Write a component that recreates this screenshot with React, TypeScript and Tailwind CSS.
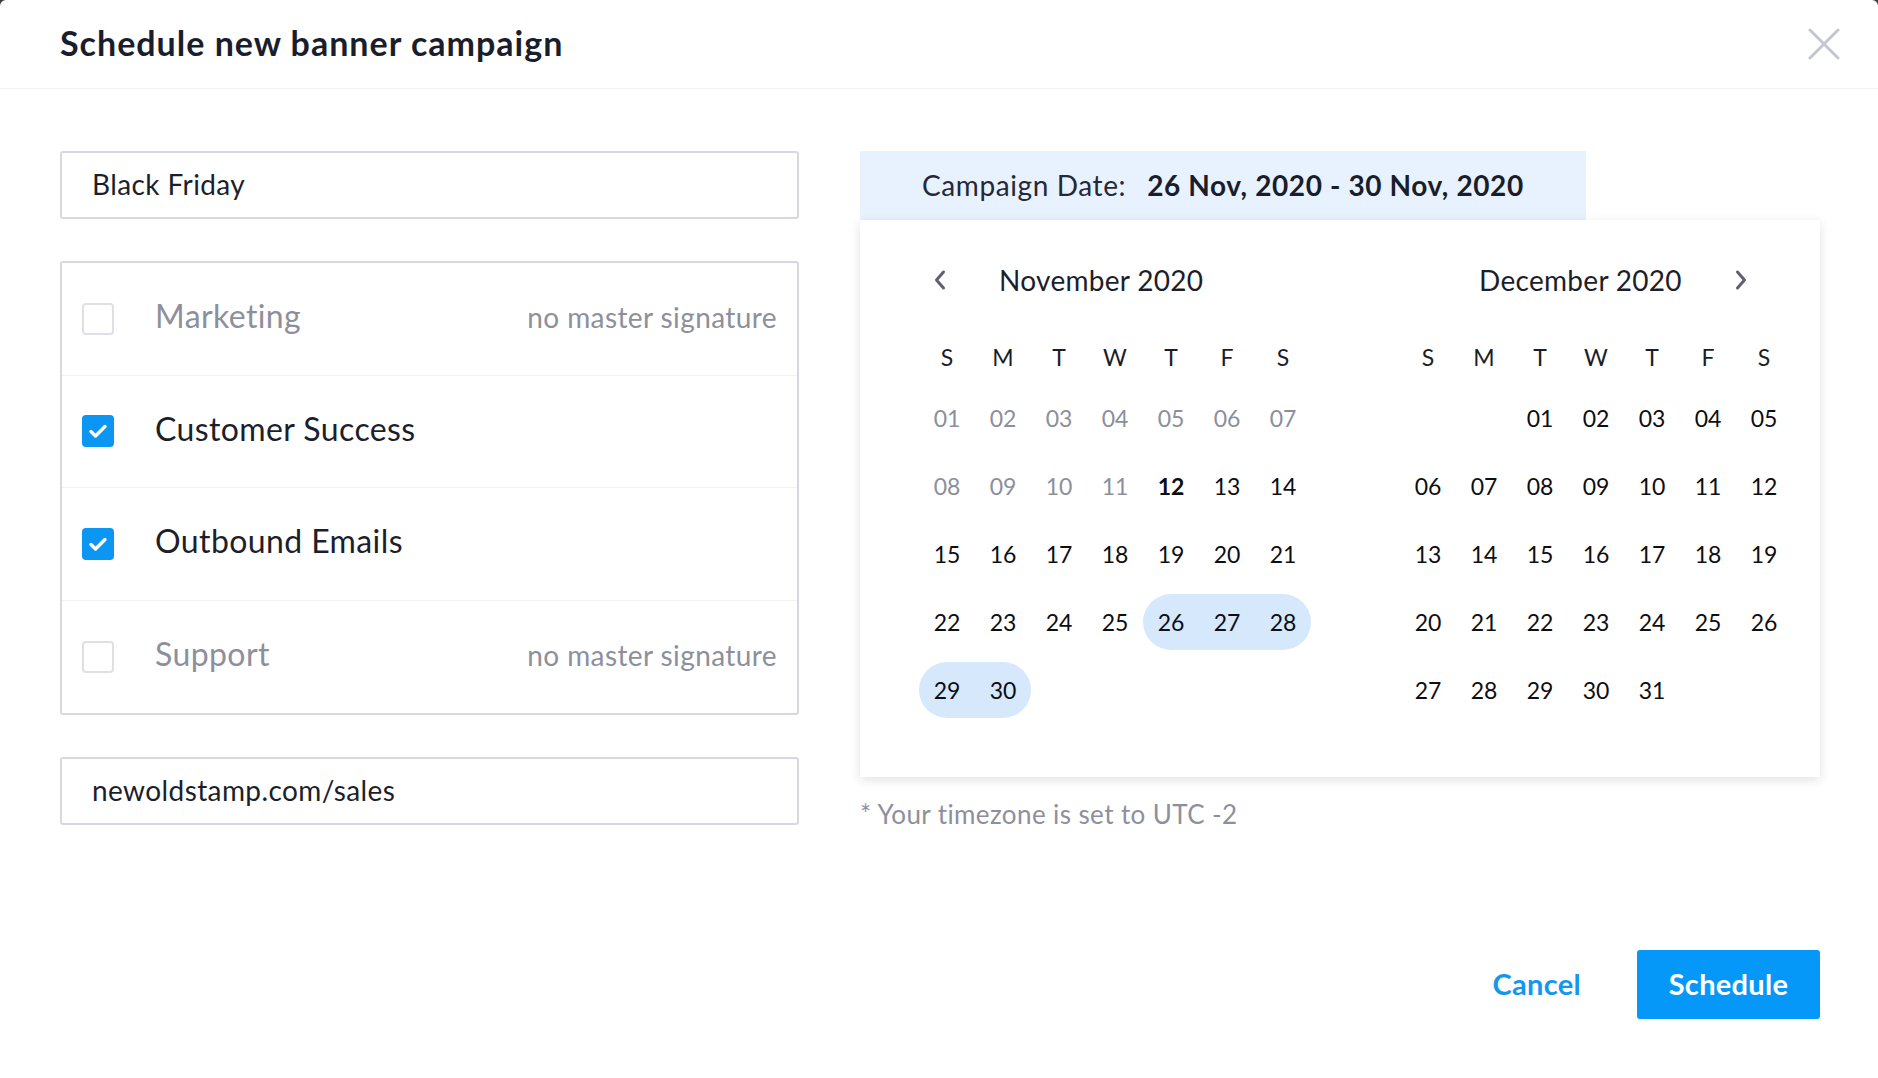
import React from "react";

const font = { fontFamily: "Lato, 'Noto Sans', sans-serif" };

type Row = { label: string; checked: boolean; note?: string };

const ROWS: Row[] = [
  { label: "Marketing", checked: false, note: "no master signature" },
  { label: "Customer Success", checked: true },
  { label: "Outbound Emails", checked: true },
  { label: "Support", checked: false, note: "no master signature" },
];

const WEEK = ["S", "M", "T", "W", "T", "F", "S"];

function pad(n: number) {
  return n < 10 ? `0${n}` : `${n}`;
}

function Checkbox({ checked }: { checked: boolean }) {
  if (!checked) {
    return <span className="block h-[32px] w-[32px] shrink-0 rounded-[4px] border-2 border-[#dfe0e7] bg-white" />;
  }
  return (
    <span className="flex h-[32px] w-[32px] shrink-0 items-center justify-center rounded-[4px] bg-[#0c96f3]">
      <svg width="20" height="16" viewBox="0 0 20 16" fill="none">
        <path d="M3 8.5l4.5 4.5L17 3.5" stroke="white" strokeWidth="3.4" strokeLinecap="round" strokeLinejoin="round" />
      </svg>
    </span>
  );
}

function Chevron({ dir }: { dir: "left" | "right" }) {
  return (
    <svg width="14" height="22" viewBox="0 0 14 22" fill="none">
      <path
        d={dir === "left" ? "M10.5 3L3.5 11l7 8" : "M3.5 3l7 8-7 8"}
        stroke="#5d6170"
        strokeWidth="3"
        strokeLinecap="round"
        strokeLinejoin="round"
      />
    </svg>
  );
}

function Month({
  offset,
  days,
  muted = 0,
  today,
  range,
}: {
  offset: number;
  days: number;
  muted?: number;
  today?: number;
  range?: [number, number];
}) {
  const cells: (number | null)[] = [];
  for (let i = 0; i < offset; i++) cells.push(null);
  for (let d = 1; d <= days; d++) cells.push(d);

  return (
    <div className="w-[392px]">
      <div className="grid h-[40px] grid-cols-7 items-center text-[23px] text-[#1b1d27]">
        {WEEK.map((w, i) => (
          <span key={i} className="text-center">{w}</span>
        ))}
      </div>
      <div className="mt-[13px] grid grid-cols-7 gap-y-[12px]">
        {cells.map((d, i) => {
          if (d === null) return <span key={i} className="h-[56px]" />;
          const col = i % 7;
          const inRange = range && d >= range[0] && d <= range[1];
          const start = inRange && (d === range![0] || col === 0);
          const end = inRange && (d === range![1] || col === 6);
          return (
            <span
              key={i}
              className={[
                "flex h-[56px] items-center justify-center text-[23px]",
                inRange ? "bg-[#d6e8fc]" : "",
                start ? "rounded-l-full" : "",
                end ? "rounded-r-full" : "",
                d <= muted ? "text-[#8c8f9b]" : "text-[#0d0e12]",
                d === today ? "font-bold" : "",
              ].join(" ")}
            >
              {pad(d)}
            </span>
          );
        })}
      </div>
    </div>
  );
}

export default function App() {
  return (
    <div className="min-h-screen bg-[#3c3c3c]" style={font}>
      <div className="flex h-[1078px] w-[1878px] flex-col rounded-t-[6px] bg-white">
        <header className="flex h-[89px] shrink-0 items-center justify-between border-b border-[#f1f2f4] pl-[60px] pr-[38px]">
          <h1 className="pb-[4px] text-[34px] font-bold tracking-[1px] text-[#1a1e2c]">Schedule new banner campaign</h1>
          <button aria-label="Close">
            <svg width="32" height="32" viewBox="0 0 32 32" fill="none">
              <path d="M2 2l28 28M30 2L2 30" stroke="#c4c6d0" strokeWidth="3" strokeLinecap="round" />
            </svg>
          </button>
        </header>

        <div className="flex gap-[61px] pl-[60px] pr-[58px] pt-[62px]">
          {/* left column */}
          <div className="w-[739px] shrink-0">
            <div className="flex h-[68px] items-center rounded-[3px] border-2 border-[#d8d9e0] px-[30px] pb-[2px] text-[28px] tracking-[0.4px] text-[#1c1f2b]">
              Black Friday
            </div>

            <div className="mt-[42px] rounded-[3px] border-2 border-[#d8d9e0] divide-y divide-[#f1f2f5]">
              {ROWS.map((r) => (
                <div key={r.label} className="flex h-[112.5px] items-center pl-[20px] pr-[20px]">
                  <Checkbox checked={r.checked} />
                  <span
                    className={`ml-[41px] pb-[5px] text-[32px] tracking-[0.4px] ${r.checked ? "text-[#1c1f2b]" : "text-[#8d909c]"}`}
                  >
                    {r.label}
                  </span>
                  {r.note && (
                    <span className="ml-auto pb-[3px] text-[28px] tracking-[0.4px] text-[#8d909c]">{r.note}</span>
                  )}
                </div>
              ))}
            </div>

            <div className="mt-[42px] flex h-[68px] items-center rounded-[3px] border-2 border-[#d8d9e0] px-[30px] pb-[2px] text-[28px] tracking-[0.4px] text-[#1c1f2b]">
              newoldstamp.com/sales
            </div>
          </div>

          {/* right column */}
          <div className="w-[960px]">
            <div className="flex h-[69px] w-[726px] items-center bg-[#e8f2fe] pb-[2px] pl-[62px] text-[28px] tracking-[0.6px] text-[#252836]">
              <span>Campaign Date:</span>
              <span className="ml-[21px] font-bold text-[#1a1d2a]">26 Nov, 2020 - 30 Nov, 2020</span>
            </div>
            <div className="h-[557px] bg-white pl-[59px] pt-[40px] shadow-[0_3px_10px_rgba(20,30,50,0.13)]">
              <div className="flex gap-[89px]">
                <div>
                  <div className="mb-[37px] flex h-[40px] items-center">
                    <span className="flex w-[42px] justify-center">
                      <Chevron dir="left" />
                    </span>
                    <span className="ml-[38px] text-[28px] tracking-[0.3px] text-[#1c1f2b]">November 2020</span>
                  </div>
                  <Month offset={0} days={30} muted={11} today={12} range={[26, 30]} />
                </div>
                <div>
                  <div className="mb-[37px] flex h-[40px] items-center">
                    <span className="ml-[79px] text-[28px] tracking-[0.3px] text-[#1c1f2b]">December 2020</span>
                    <span className="ml-[38px] flex w-[42px] justify-center">
                      <Chevron dir="right" />
                    </span>
                  </div>
                  <Month offset={2} days={31} />
                </div>
              </div>
            </div>
            <p className="mt-[18px] text-[26px] tracking-[0.4px] text-[#8d909c]">* Your timezone is set to UTC -2</p>
          </div>
        </div>

        <footer className="mt-auto flex items-center justify-end gap-[56px] pb-[59px] pr-[58px]">
          <button className="pb-[2px] text-[29px] font-bold tracking-[0.3px] text-[#1596ee]">Cancel</button>
          <button className="flex h-[69px] w-[183px] items-center justify-center rounded-[3px] bg-[#0598f8] pb-[2px] text-[29px] font-bold tracking-[0.3px] text-white">
            Schedule
          </button>
        </footer>
      </div>
    </div>
  );
}
